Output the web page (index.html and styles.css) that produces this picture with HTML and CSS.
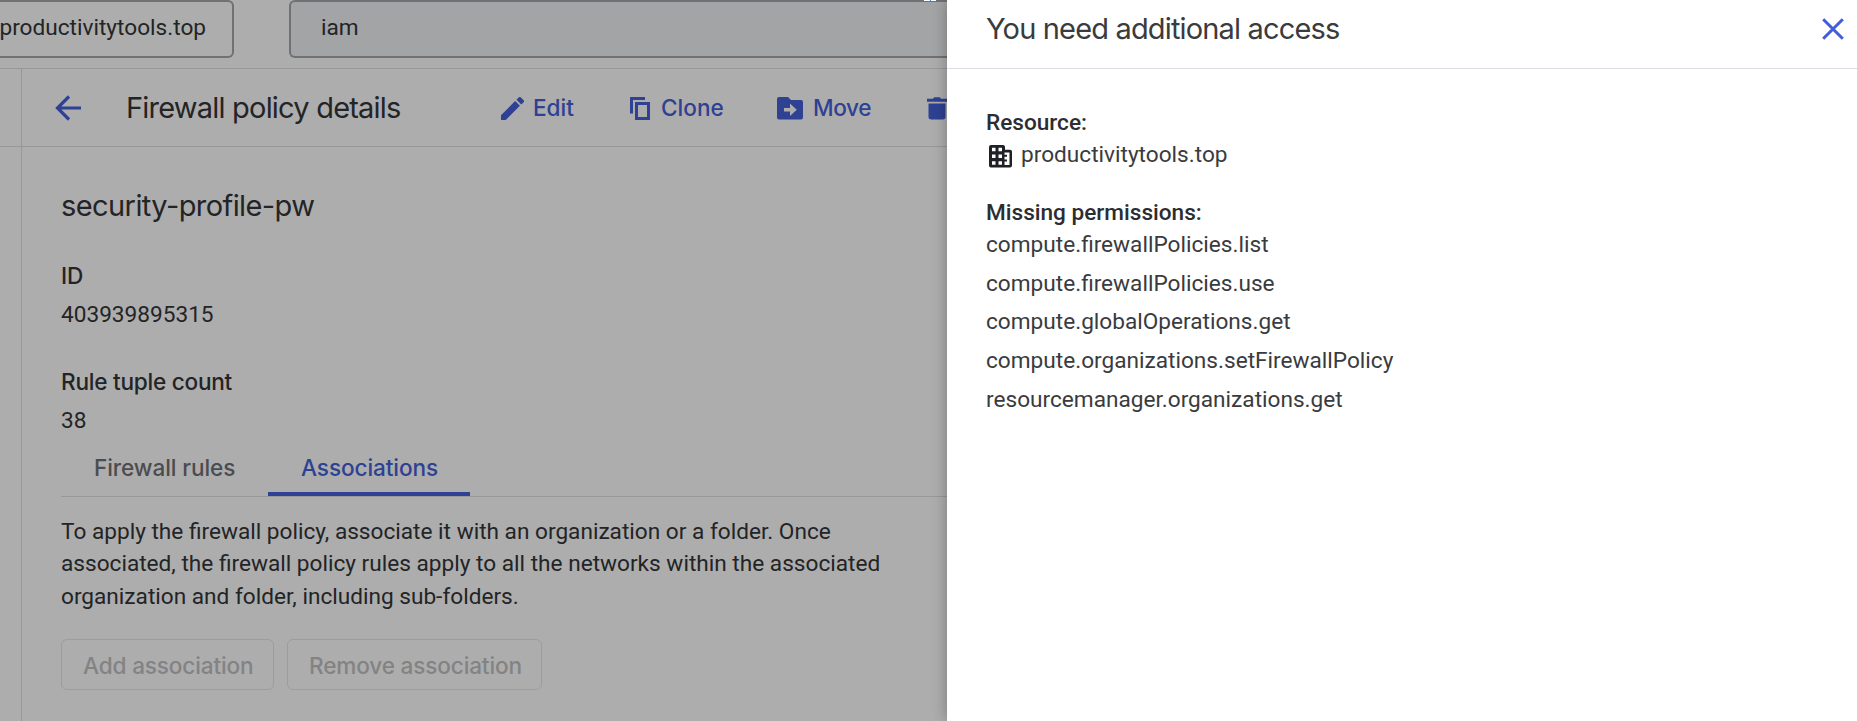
FILE: index.html
```html
<!DOCTYPE html>
<html lang="en">
<head>
<meta charset="utf-8">
<title>Firewall policy details</title>
<link rel="stylesheet" href="styles.css">
</head>
<body>
<div class="app">
  <main class="page">
    <header class="topbar">
      <div class="project"><span>productivitytools.top</span></div>
      <div class="search"><span>iam</span></div>
      <i class="caret-tip"></i>
    </header>
    <div class="body">
      <nav class="rail"><div class="rail-head"></div></nav>
      <section class="content">
        <div class="toolbar">
          <svg class="back" viewBox="0 0 26 26"><path d="M26 13H2.500M14 1.500L2.500 13L14 24.500" fill="none" stroke="currentColor" stroke-width="3.200"/></svg>
          <h1 class="title"><span>Firewall policy details</span></h1>
          <a class="action edit"><svg viewBox="3 3 18 18"><path d="M3 17.250V21h3.750L17.810 9.940l-3.750-3.750L3 17.250zM20.710 7.040a1 1 0 0 0 0-1.410l-2.340-2.340a1 1 0 0 0-1.410 0l-1.830 1.830 3.750 3.750 1.830-1.830z"/></svg><span>Edit</span></a>
          <a class="action clone"><svg viewBox="0 0 20 23"><path d="M1.500 16.500V1.500H15M6.500 6.500h12v15h-12z" fill="none" stroke="currentColor" stroke-width="3"/></svg><span>Clone</span></a>
          <a class="action move"><svg viewBox="0 0 26 23"><path fill-rule="evenodd" d="M2 0H11L14 3H24a2 2 0 0 1 2 2V20.500a2 2 0 0 1-2 2H2a2 2 0 0 1-2-2V2A2 2 0 0 1 2 0zM13 6.500V11H7V14.500H13V19L19.800 12.800z"/></svg><span>Move</span></a>
          <a class="action trash"><svg viewBox="0 0 20 23"><path d="M0 1.700H6L7.200.3H12.800L14 1.700H20V4.700H0zM1.500 6.500H18.500V19.700a2.700 2.700 0 0 1-2.700 2.700H4.200a2.700 2.700 0 0 1-2.700-2.700z"/></svg></a>
        </div>
        <div class="details">
          <h2 class="name"><span>security-profile-pw</span></h2>
          <dl class="facts">
            <dt>ID</dt><dd>403939895315</dd>
            <dt>Rule tuple count</dt><dd>38</dd>
          </dl>
          <div class="tabs">
            <div class="tab rules"><span>Firewall rules</span></div>
            <div class="tab active"><span>Associations</span></div>
          </div>
          <p class="text">To apply the firewall policy, associate it with an organization or a folder. Once<br>associated, the firewall policy rules apply to all the networks within the associated<br>organization and folder, including sub-folders.</p>
          <div class="buttons">
            <div class="btn add"><span>Add association</span></div>
            <div class="btn remove"><span>Remove association</span></div>
          </div>
        </div>
      </section>
    </div>
  </main>
  <aside class="drawer">
    <header class="drawer-head">
      <h2><span>You need additional access</span></h2>
      <svg class="close" viewBox="0 0 22 22"><path d="M1.200 1.200L20.800 20.800M20.800 1.200L1.200 20.800" fill="none" stroke="currentColor" stroke-width="3"/></svg>
    </header>
    <div class="drawer-body">
      <h3>Resource:</h3>
      <div class="resource">
        <svg viewBox="0 0 23 23"><path fill-rule="evenodd" d="M2 0H14a2 2 0 0 1 2 2V4.700H21a2 2 0 0 1 2 2V20.600a2 2 0 0 1-2 2H2a2 2 0 0 1-2-2V2A2 2 0 0 1 2 0zM3 2.800v3.500h3.500v-3.500zM9.500 2.800v3.500h3.500v-3.500zM3 9.500v3.500h3.500v-3.500zM9.500 9.500v3.500h3.500v-3.500zM3 16.300v3.500h3.500v-3.500zM9.500 16.300v3.500h3.500v-3.500zM15.500 7.400v2.400h2.500v2h-2.500v2.800h2.500v2h-2.500v3.400h5V7.400z"/></svg>
        <span>productivitytools.top</span>
      </div>
      <h3>Missing permissions:</h3>
      <ul>
        <li>compute.firewallPolicies.list</li>
        <li>compute.firewallPolicies.use</li>
        <li>compute.globalOperations.get</li>
        <li>compute.organizations.setFirewallPolicy</li>
        <li>resourcemanager.organizations.get</li>
      </ul>
    </div>
  </aside>
</div>
</body>
</html>
```
FILE: styles.css
```css
* { box-sizing: border-box; margin: 0; padding: 0; }
body { font: 22.63px/32.3px Roboto, sans-serif; color: #232426; overflow: hidden; }
.app { display: flex; width: 1857px; height: 721px; overflow: hidden; background: #adadad; }
.page { width: 947px; flex: none; display: flex; flex-direction: column; overflow: hidden; }
span { white-space: nowrap; }
h1, h2, h3 { font-weight: 400; }
svg { display: block; flex: none; fill: currentColor; }

.topbar { height: 69px; flex: none; display: flex; border-bottom: 1px solid #97979c; position: relative; }
.project { width: 234px; height: 58px; border: 2px solid #707174; border-left: 0; border-radius: 0 6px 6px 0; display: flex; justify-content: flex-end; padding: 10px 26px 0 0; }
.search { margin-left: 55px; flex: 1; height: 58px; border: 2px solid #707174; border-right: 0; border-radius: 6px 0 0 6px; background: #a2a4a6; padding: 10px 0 0 30px; }
.caret-tip { position: absolute; left: 924px; top: 0; width: 12px; height: 1px; background: linear-gradient(90deg, #fff 6px, #4a80d8 6px 7px, #fff 7px); }

.body { flex: 1; display: flex; }
.rail { width: 22px; flex: none; border-right: 1px solid #98989b; }
.rail-head { height: 78px; border-bottom: 1px solid #98989b; }
.content { flex: 1; min-width: 0; }
.toolbar { height: 78px; border-bottom: 1px solid #98989b; display: flex; align-items: flex-start; padding-left: 33px; overflow: hidden; }
.back { width: 26px; height: 26px; margin-top: 26px; color: #2e4192; }
.title { font: 29px/40px Inter, sans-serif; letter-spacing: -.79px; margin: 19px 0 0 45px; width: 274px; flex: none; }
.action { display: flex; align-items: flex-start; color: #2e4192; font: 500 22.6px/32px Inter, sans-serif; flex: none; }
.action svg { height: 23px; margin-top: 28px; }
.action span { margin-top: 23px; }
.edit { margin-left: 101px; width: 129px; gap: 9px; }
.edit svg { width: 23px; }
.clone { width: 147px; gap: 11px; }
.clone svg { width: 20px; }
.move { width: 150px; gap: 10px; letter-spacing: -.4px; }
.move svg { width: 26px; }
.trash svg { width: 20px; }

.details { padding-left: 39px; }
.name { font: 29px/40px Inter, sans-serif; letter-spacing: -.58px; margin-top: 39px; }
.facts { margin-top: 34px; }
.facts dt { font: 500 22.6px/32px Inter, sans-serif; letter-spacing: -.25px; height: 39px; }
.facts dd { height: 67px; line-height: 32px; }
.facts dd:last-child { height: 32px; }
.tabs { display: flex; height: 60px; border-bottom: 1px solid #98989b; font: 500 22.6px/32px Inter, sans-serif; letter-spacing: -.1px; }
.tab { height: 59px; padding-top: 15px; }
.rules { width: 207px; padding-left: 33px; color: #4b4c4f; }
.active { width: 202px; padding-left: 33px; border-bottom: 4px solid #2e4192; color: #2e4192; }
.text { margin-top: 19px; }
.buttons { display: flex; gap: 13px; margin-top: 26px; }
.btn { height: 51px; border: 1px solid #9d9d9d; border-radius: 6px; font: 500 22.6px/32px Inter, sans-serif; letter-spacing: -.16px; color: #838384; padding: 10px 0 0 21px; }
.add { width: 213px; }
.remove { width: 255px; }

.drawer { flex: 1; background: #fff; box-shadow: 0 0 14px rgba(0,0,0,.3); position: relative; color: #3a3b3e; }
.drawer-head { height: 69px; border-bottom: 1px solid #dcdde6; display: flex; justify-content: space-between; padding: 0 13px 0 39px; }
.drawer-head h2 { font: 29px/40px Inter, sans-serif; letter-spacing: -.84px; margin-top: 9px; }
.close { width: 22px; height: 22px; margin-top: 18px; color: #435cd8; }
.drawer-body { padding: 38px 0 0 39px; }
h3 { font: 500 22.6px/32px Roboto, sans-serif; color: #2c2d30; }
.resource { display: flex; gap: 9px; padding-left: 3px; height: 58px; line-height: 32px; }
.resource svg { width: 23px; height: 23px; margin-top: 6px; color: #202124; }
ul { list-style: none; }
li { height: 38.7px; line-height: 32px; }
```
